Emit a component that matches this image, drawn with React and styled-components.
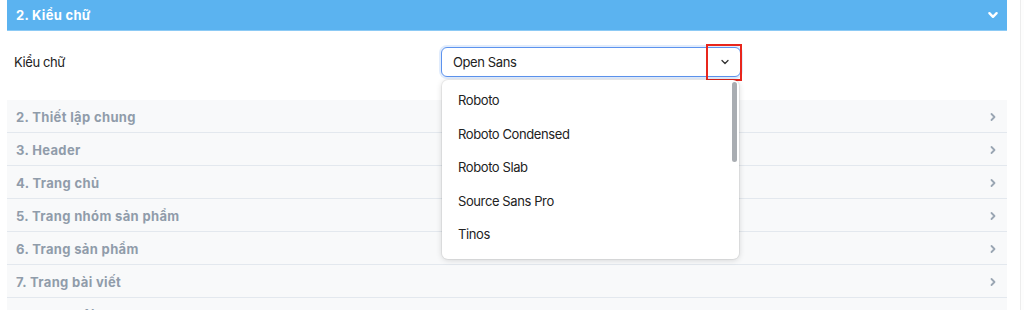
import React from "react";
import styled, { createGlobalStyle } from "styled-components";

const Global = createGlobalStyle`
  html, body { margin: 0; padding: 0; background: #fff; }
  body { font-family: Inter, "Noto Sans", "Liberation Sans", sans-serif; font-size: 13px; color: #222; letter-spacing: -0.4px; }
`;

const Page = styled.div`
  display: flex;
  height: 310px;
  overflow: hidden;
`;

const Main = styled.div`
  width: 1000px;
  margin-left: 7px;
`;

const Track = styled.div`
  margin-left: 13px;
  flex: 1;
  border-left: 1px solid #ededed;
  background: #fdfdfd;
`;

const Head = styled.div`
  height: 31px;
  display: flex;
  align-items: center;
  justify-content: space-between;
  padding: 0 8px 0 9px;
  background: #5bb3f0;
  color: #fff;
  font-weight: 700;
  letter-spacing: 0.3px;
  border-bottom: 1px solid #8ccaf5;
  box-sizing: border-box;
`;

const Body = styled.div`
  display: grid;
  grid-template-columns: 427px 300px;
  align-items: center;
  padding: 16px 7px 23px;
  height: 69px;
  box-sizing: border-box;
`;

const Label = styled.span`
  color: #222;
`;

const SelectWrap = styled.div`
  position: relative;
  height: 30px;
`;

const Select = styled.div`
  height: 100%;
  box-sizing: border-box;
  display: flex;
  align-items: center;
  justify-content: space-between;
  padding: 0 10px 0 11px;
  border: 1px solid #5d93ee;
  border-radius: 6px;
  box-shadow: 0 0 0 2px rgba(91, 147, 238, 0.18);
  color: #222;
  background: #fff;
`;

const Mark = styled.div`
  position: absolute;
  left: 265px;
  top: -3px;
  width: 36px;
  height: 37px;
  box-sizing: border-box;
  border: 2px solid #e8261c;
`;

const Menu = styled.div`
  position: absolute;
  left: 1px;
  top: 33px;
  width: 297px;
  padding: 4px 0 7px;
  background: #fff;
  border-radius: 6px;
  box-shadow: 0 1px 6px rgba(0, 0, 0, 0.16), 0 0 0 1px rgba(0, 0, 0, 0.05);
  z-index: 2;
`;

const Option = styled.div`
  height: 33.6px;
  line-height: 33.6px;
  padding-left: 16px;
  color: #222;
`;

const Thumb = styled.div`
  position: absolute;
  right: 2px;
  top: 2px;
  width: 5px;
  height: 80px;
  border-radius: 3px;
  background: #a9adb2;
`;

const Row = styled.div`
  height: 33px;
  box-sizing: border-box;
  display: flex;
  align-items: center;
  justify-content: space-between;
  padding: 1px 9px 0;
  background: #f8f9fa;
  border-bottom: 1px solid #e3e8ee;
  color: #909caa;
  font-weight: 700;
  letter-spacing: 0.35px;
`;

const Chevron = ({ dir, color, width, size = 10 }) => (
  <svg width={size} height={size} viewBox="0 0 10 10">
    <path
      d={dir === "down" ? "M2 3.5 L5 6.5 L8 3.5" : "M3.5 2 L6.5 5 L3.5 8"}
      fill="none"
      stroke={color}
      strokeWidth={width}
      strokeLinecap="round"
      strokeLinejoin="round"
    />
  </svg>
);

const options = ["Roboto", "Roboto Condensed", "Roboto Slab", "Source Sans Pro", "Tinos"];
const sections = [
  "2. Thiết lập chung",
  "3. Header",
  "4. Trang chủ",
  "5. Trang nhóm sản phẩm",
  "6. Trang sản phẩm",
  "7. Trang bài viết",
  "8. Trang nội dung",
];

export default function App() {
  return (
    <Page>
      <Global />
      <Main>
        <Head>
          <span>2. Kiểu chữ</span>
          <Chevron dir="down" color="#fff" width={2} size={12} />
        </Head>
        <Body>
          <Label>Kiểu chữ</Label>
          <SelectWrap>
            <Select>
              <span>Open Sans</span>
              <Chevron dir="down" color="#333" width={1.3} />
            </Select>
            <Mark />
            <Menu>
              {options.map((o) => (
                <Option key={o}>{o}</Option>
              ))}
              <Thumb />
            </Menu>
          </SelectWrap>
        </Body>
        {sections.map((s) => (
          <Row key={s}>
            <span>{s}</span>
            <Chevron dir="right" color="#9aa6b3" width={1.8} />
          </Row>
        ))}
      </Main>
      <Track />
    </Page>
  );
}
